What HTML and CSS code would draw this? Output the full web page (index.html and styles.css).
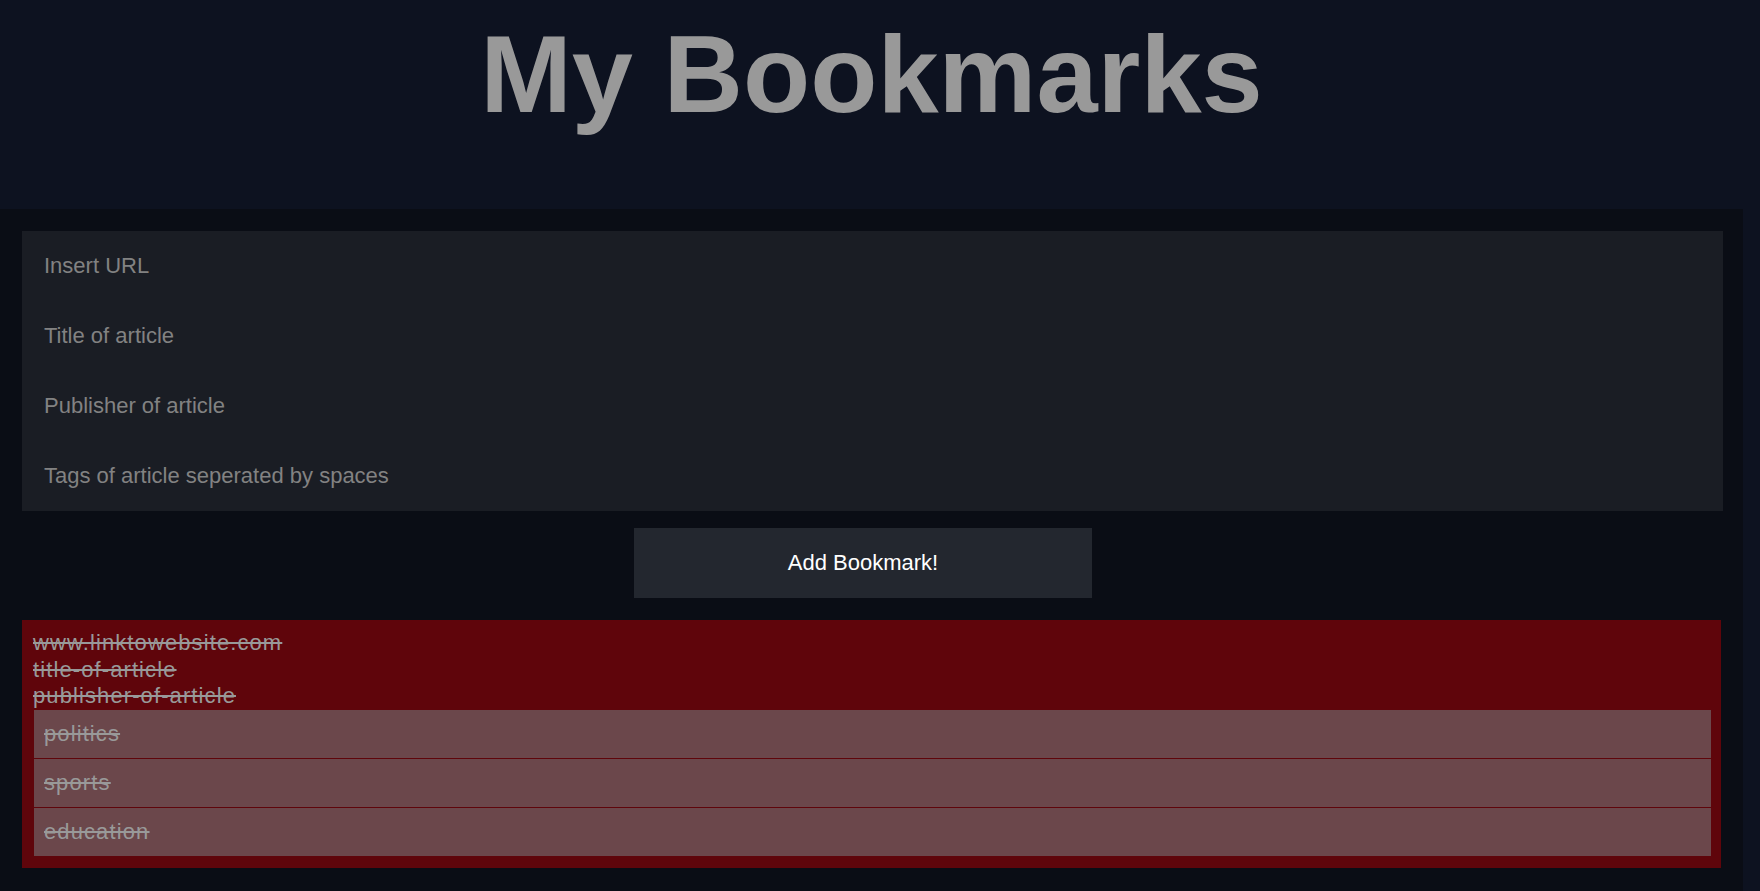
FILE: index.html
```html
<!DOCTYPE html>
<html lang="en">
<head>
<meta charset="utf-8">
<title>My Bookmarks</title>
<link rel="stylesheet" href="styles.css">
</head>
<body>
<div class="page">
  <header class="header">
    <h1 class="title">My Bookmarks</h1>
  </header>
  <main class="main">
    <form class="form">
      <input class="field" type="text" placeholder="Insert URL">
      <input class="field" type="text" placeholder="Title of article">
      <input class="field" type="text" placeholder="Publisher of article">
      <input class="field" type="text" placeholder="Tags of article seperated by spaces">
    </form>
    <div class="actions">
      <button class="add-btn" type="button">Add Bookmark!</button>
    </div>
    <div class="bookmark">
      <div class="line">www.linktowebsite.com</div>
      <div class="line">title-of-article</div>
      <div class="line">publisher-of-article</div>
      <ul class="tags">
        <li class="tag">politics</li>
        <li class="tag">sports</li>
        <li class="tag">education</li>
      </ul>
    </div>
  </main>
</div>
</body>
</html>
```
FILE: styles.css
```css
html, body {
  margin: 0;
  padding: 0;
  background: #0d1220;
  font-family: "Liberation Sans", Arial, sans-serif;
}

.page {
  width: 1743px;
}

.header {
  height: 209px;
  box-sizing: border-box;
  padding-top: 10px;
}

.title {
  margin: 0;
  text-align: center;
  font-size: 110px;
  font-weight: bold;
  color: #999999;
  line-height: normal;
}

.main {
  background: #0a0d15;
  padding: 22px 20px 22px 22px;
  min-height: 700px;
  box-sizing: border-box;
  display: flex;
  flex-direction: column;
}

.form {
  display: flex;
  flex-direction: column;
  background: #1a1d24;
}

.field {
  display: block;
  height: 70px;
  box-sizing: border-box;
  border: none;
  outline: none;
  background: #1a1d24;
  padding: 0 22px;
  font-family: "Liberation Sans", Arial, sans-serif;
  font-size: 22px;
  color: #cccccc;
}

.field::placeholder {
  color: #828282;
}

.actions {
  display: flex;
  padding: 17px 0 22px 612px;
}

.add-btn {
  width: 458px;
  height: 70px;
  border: none;
  background: #23272f;
  color: #ffffff;
  font-family: "Liberation Sans", Arial, sans-serif;
  font-size: 22px;
}

.bookmark {
  background: #5f050b;
  padding: 10px 10px 12px 11px;
  margin-right: 2px;
  color: #999999;
  font-size: 22px;
  letter-spacing: 1.1px;
  text-decoration: line-through;
}

.line {
  line-height: 26.67px;
}

.tags {
  list-style: none;
  margin: 0 0 0 1px;
  padding: 0;
  display: flex;
  flex-direction: column;
  gap: 1px;
}

.tag {
  height: 48px;
  line-height: 48px;
  background: #6b474b;
  padding: 0 10px;
  text-decoration: line-through;
}
```
